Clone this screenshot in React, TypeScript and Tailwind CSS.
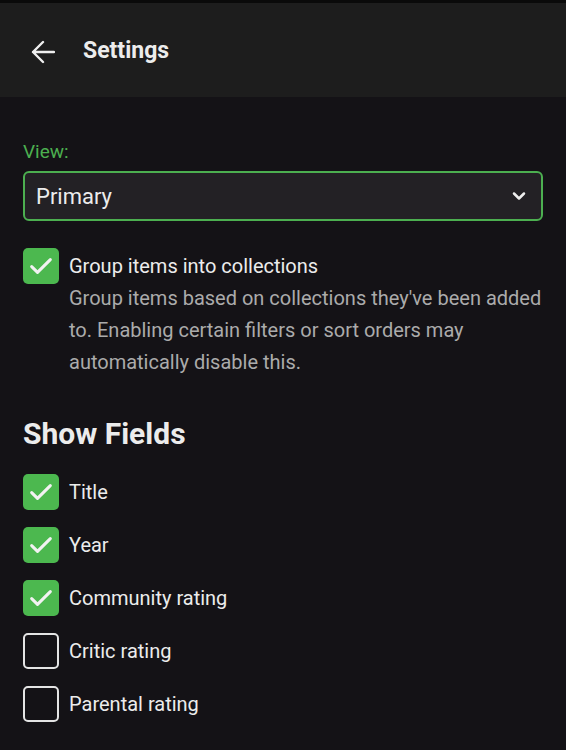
import { ChevronDown } from "lucide-react";

const fields = [
  { label: "Title", on: true },
  { label: "Year", on: true },
  { label: "Community rating", on: true },
  { label: "Critic rating", on: false },
  { label: "Parental rating", on: false },
];

function Box({ on }: { on: boolean }) {
  if (on) {
    return (
      <div className="w-[36px] h-[36px] shrink-0 rounded-[5px] bg-[#4cb84f] flex items-center justify-center">
        <svg width="28" height="28" viewBox="0 0 24 24" fill="none" stroke="#f2f2f2" strokeWidth="2.6" strokeLinecap="round" strokeLinejoin="round">
          <path d="M4 12.5l5 5L20 6.5" />
        </svg>
      </div>
    );
  }
  return <div className="w-[36px] h-[36px] shrink-0 rounded-[5px] border-2 border-[#e4e4e4]" />;
}

export default function App() {
  return (
    <div className="w-[566px] h-[750px] bg-[#141216] text-[#ececec] font-['Roboto',sans-serif] border-t-[3px] border-[#0a0a0a]">
      <div className="h-[94px] bg-[#1d1d1d] flex items-center pl-[31px] pt-[3px]">
        <svg width="24" height="24" viewBox="0 0 24 24" fill="none" stroke="#eeeeee" strokeWidth="2.4" strokeLinecap="round" strokeLinejoin="round">
          <path d="M23 12H2M12 2L2 12l10 10" />
        </svg>
        <span className="ml-[28px] text-[23px] font-bold">Settings</span>
      </div>

      <div className="px-[23px] pt-[44px]">
        <div className="text-[19px] text-[#4caf50] leading-[22px]">View:</div>
        <div className="mt-[8px] h-[50px] rounded-[6px] border-2 border-[#4caf50] bg-[#232125] flex items-center justify-between pl-[11px] pr-[12px]">
          <span className="text-[22px]">Primary</span>
          <ChevronDown size={20} strokeWidth={3} className="text-[#eeeeee]" />
        </div>

        <div className="mt-[27px] flex gap-[10px]">
          <Box on />
          <div className="pt-[3px]">
            <div className="text-[20px] leading-[30px]">Group items into collections</div>
            <div className="mt-[1px] text-[20px] leading-[32px] text-[#ababab]">
              Group items based on collections they've been added to. Enabling certain filters or sort orders may automatically disable this.
            </div>
          </div>
        </div>

        <h2 className="mt-[38px] text-[30px] font-bold leading-[36px]">Show Fields</h2>

        <div className="mt-[22px] flex flex-col gap-[17px]">
          {fields.map((f) => (
            <div key={f.label} className="flex items-center gap-[10px]">
              <Box on={f.on} />
              <span className="text-[20px]">{f.label}</span>
            </div>
          ))}
        </div>
      </div>
    </div>
  );
}
